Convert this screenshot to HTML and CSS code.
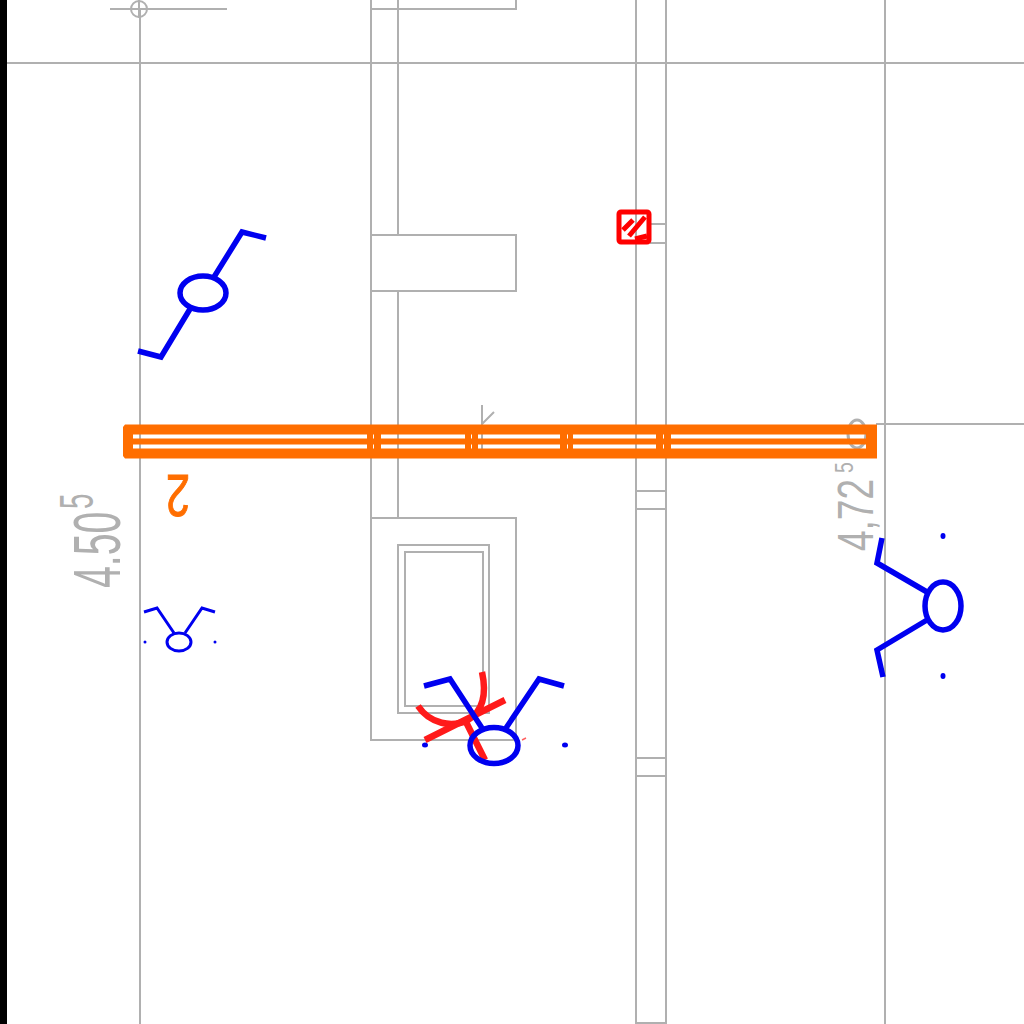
FILE: index.html
```html
<!DOCTYPE html>
<html lang="en">
<head>
<meta charset="utf-8">
<title>Plan</title>
<link rel="stylesheet" href="styles.css">
</head>
<body>
<div class="page">
<div class="edge"></div>
<svg class="plan" viewBox="7 0 1017 1024" aria-label="Floor plan">
  <g class="grey">
    <path d="M7 63H1024M876 424H1024M140 9V1024M885 0V1024M636 0V1023H666V0"/>
    <path d="M110 9H227M139 0V18M130 9H148"/>
    <circle cx="139" cy="9" r="8"/>
    <path d="M371 0V740H516V518H371M398 0V235M398 291V518M371 9H516V0M371 235H516V291H371"/>
    <rect x="398" y="545" width="91" height="168"/>
    <rect x="405" y="552" width="78" height="154"/>
    <path d="M636 491H666M636 509H666M636 758H666M636 776H666M650 224H666M650 243H666"/>
    <path d="M482 405V449M482 424L494 412"/>
    <ellipse class="ring" cx="857" cy="434" rx="9" ry="14"/>
  </g>
  <path class="beam" fill-rule="evenodd" d="M125 424.500H877V458.500H125L123 456V427ZM133 434.500H367V438.500H133ZM133 444.500H367V448.500H133ZM381 434.500H465V438.500H381ZM381 444.500H465V448.500H381ZM478 434.500H560V438.500H478ZM478 444.500H560V448.500H478ZM573 434.500H656V438.500H573ZM573 444.500H656V448.500H573ZM671 434.500H866V438.500H671ZM671 444.500H866V448.500H671ZM373 434.500H374V438.500H373ZM373 444.500H374V448.500H373ZM471 434.500H472V438.500H471ZM471 444.500H472V448.500H471ZM567 434.500H568V438.500H567ZM567 444.500H568V448.500H567ZM663 434.500H664V438.500H663ZM663 444.500H664V448.500H663Z"/>
  <text class="label-orange" transform="translate(190 475) rotate(180) scale(0.72 1)">2</text>
  <text class="dim dim-big" transform="translate(120 588) rotate(-90) scale(0.585 1)">4.50</text>
  <text class="dim dim-big-sup" transform="translate(93 509) rotate(-90) scale(0.58 1)">5</text>
  <text class="dim dim-mid" transform="translate(873 551) rotate(-90) scale(0.74 1)">4,72</text>
  <text class="dim dim-mid-sup" transform="translate(853 473) rotate(-90) scale(0.75 1)">5</text>
  <g class="red-thick">
    <path d="M482 672C487 695 483 711 468 720C452 728 430 724 418 706"/>
    <path d="M425 740L505 700M466 722L485 760"/>
  </g>
  <path class="red-thin" d="M522 740L526 738"/>
  <g class="person">
    <ellipse cx="203" cy="293" rx="23" ry="17"/>
    <path d="M214 277L242 232L266 238M190 309L161 357L138 351"/>
    <ellipse cx="494" cy="745.500" rx="24" ry="18"/>
    <path d="M482 728L450 679L424 686M506 728L539 679L564 686"/>
    <ellipse cx="943" cy="606" rx="18" ry="24"/>
    <path d="M927 592L877 563L882 538M927 620L877 650L883 677"/>
  </g>
  <g class="person-small">
    <ellipse cx="179" cy="642" rx="12" ry="9"/>
    <path d="M174 633L157 608L144 612M185 633L202 608L215 612"/>
  </g>
  <g class="dots">
    <ellipse cx="425" cy="745" rx="3" ry="2.500"/>
    <ellipse cx="565" cy="745" rx="3" ry="2.500"/>
    <ellipse cx="943" cy="536" rx="2.500" ry="3"/>
    <ellipse cx="943" cy="676" rx="2.500" ry="3"/>
    <circle cx="145" cy="642" r="1.500"/>
    <circle cx="215" cy="642" r="1.500"/>
  </g>
  <rect class="tag-box" x="619" y="212" width="30" height="30" rx="2"/>
  <path class="tag-mark" d="M623 230L633 220M629 236L645 217M635 239L647 236"/>
</svg>
</div>
</body>
</html>
```
FILE: styles.css
```css
html, body {
  margin: 0;
  padding: 0;
  background: #ffffff;
}
.page {
  display: flex;
  width: 1024px;
  height: 1024px;
  overflow: hidden;
}
.edge {
  flex: 0 0 7px;
  background: #000000;
}
.plan {
  flex: 1 1 auto;
  display: block;
  height: 1024px;
}
.grey {
  fill: none;
  stroke: #b0b0b0;
  stroke-width: 2;
}
.ring {
  stroke-width: 3;
}
.beam {
  fill: #ff6e00;
}
.label-orange {
  fill: #ff6e00;
  stroke: #ff6e00;
  stroke-width: 1;
  font-family: "Liberation Sans", Arial, sans-serif;
  font-size: 60px;
}
.dim {
  fill: #b0b0b0;
  font-family: "Liberation Sans", Arial, sans-serif;
}
.dim-big { font-size: 67px; }
.dim-big-sup { font-size: 48px; }
.dim-mid { font-size: 50px; }
.dim-mid-sup { font-size: 26px; }
.red-thick {
  fill: none;
  stroke: #ff1a1a;
  stroke-width: 6.500;
}
.red-thin {
  fill: none;
  stroke: #ff6060;
  stroke-width: 1.500;
}
.person {
  fill: none;
  stroke: #0000f0;
  stroke-width: 5.500;
}
.person-small {
  fill: none;
  stroke: #0000f0;
  stroke-width: 3;
}
.dots {
  fill: #0000f0;
}
.tag-box {
  fill: none;
  stroke: #ff0000;
  stroke-width: 5;
}
.tag-mark {
  fill: none;
  stroke: #ff0000;
  stroke-width: 5;
}
```
